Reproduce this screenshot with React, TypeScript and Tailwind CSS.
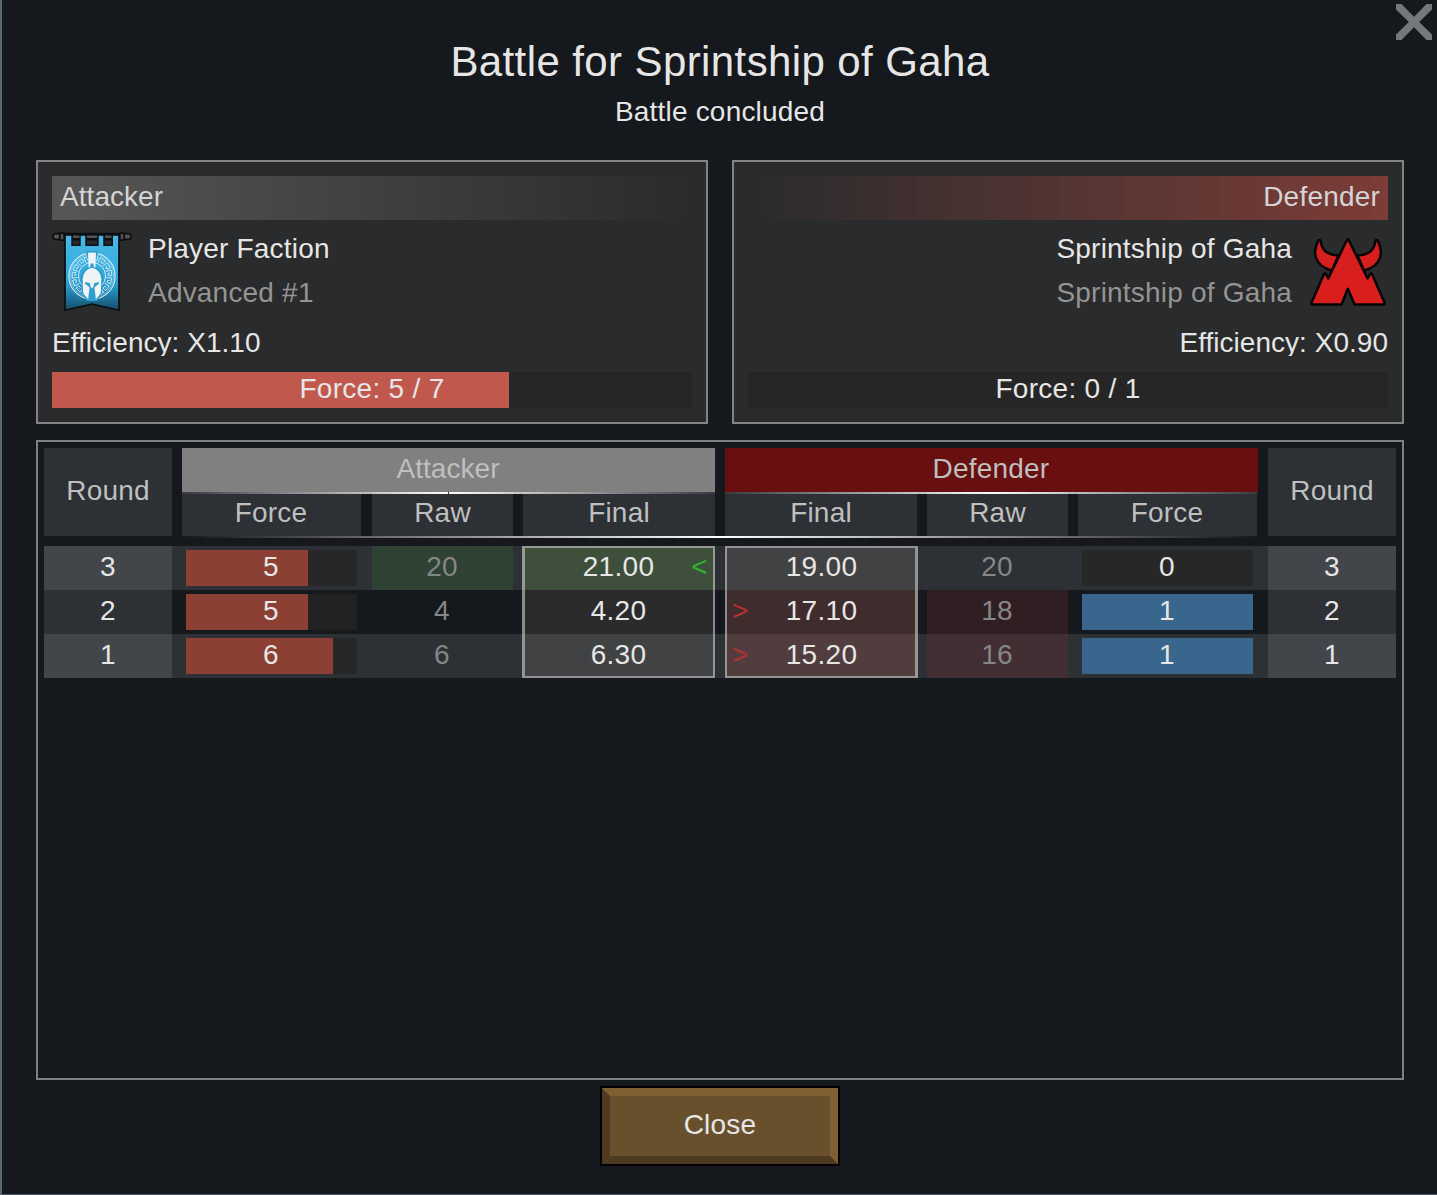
import type { ReactNode } from "react"
import clsx from "clsx"

type Side = "attacker" | "defender"

type Entry = {
  force: number
  raw: number
  final: string
  best?: boolean
  worst?: boolean
}

type Round = {
  id: number
  attacker: Entry
  defender: Entry
}

const MAX_FORCE = { attacker: 7, defender: 1 }

const rounds: Round[] = [
  {
    id: 3,
    attacker: { force: 5, raw: 20, final: "21.00", best: true },
    defender: { force: 0, raw: 20, final: "19.00" },
  },
  {
    id: 2,
    attacker: { force: 5, raw: 4, final: "4.20" },
    defender: { force: 1, raw: 18, final: "17.10", worst: true },
  },
  {
    id: 1,
    attacker: { force: 6, raw: 6, final: "6.30" },
    defender: { force: 1, raw: 16, final: "15.20", worst: true },
  },
]

// Greek key ring, walked in polar coordinates around the shield centre
const keyUnit = [
  [0, 14.6],
  [0, 20],
  [0.72, 20],
  [0.72, 16.4],
  [0.36, 16.4],
  [0.36, 18.2],
]

const keyPath = () => {
  const count = 15
  let d = ""
  for (let i = 0; i < count; i++) {
    keyUnit.forEach(([a, r], j) => {
      const angle = ((i + a) / count) * Math.PI * 2
      const x = 40 + Math.sin(angle) * r
      const y = 44 - Math.cos(angle) * r
      d += `${j === 0 ? "M" : "L"}${x.toFixed(2)} ${y.toFixed(2)}`
    })
  }
  return d
}

const BannerIcon = () => (
  <svg viewBox="0 0 80 80" className="h-20 w-20 shrink-0">
    <defs>
      <linearGradient id="cloth" x1="0" y1="0" x2="0" y2="1">
        <stop offset="0" stopColor="#46b8e6" />
        <stop offset="0.45" stopColor="#38ade0" />
        <stop offset="0.7" stopColor="#2795c8" />
        <stop offset="1" stopColor="#174c68" />
      </linearGradient>
    </defs>
    <path d="M13 3H67V78.3L40 72 13 78.3Z" fill="url(#cloth)" stroke="#0b0d0f" strokeWidth="1.7" />
    <path d="M19.3 2H28.7V14H19.3ZM33.3 2H46.7V14H33.3ZM51.3 2H61V14H51.3Z" fill="#0d0e0f" />
    <path d="M20.6 8.6H27.4V12.6H20.6ZM34.8 8.6H45.2V12.6H34.8ZM52.8 8.6H59.6V12.6H52.8Z" fill="#2a2b2c" />
    <path d="M21 3.6H27.5V6H21ZM35 3.6H45V6H35ZM53 3.6H59.5V6H53Z" fill="#555" />
    <path d="M5 1.8H75" stroke="#0b0d0f" strokeWidth="2" />
    <g fill="#505152" stroke="#0b0d0f" strokeWidth="1.7">
      <rect x="0.9" y="1.6" width="9" height="5.8" rx="2.6" />
      <rect x="7.8" y="0.9" width="4.4" height="7.4" rx="2" />
      <rect x="70.1" y="1.6" width="9" height="5.8" rx="2.6" />
      <rect x="67.8" y="0.9" width="4.4" height="7.4" rx="2" />
    </g>
    <g fill="none" stroke="#cfecf7">
      <circle cx="40" cy="44" r="23.2" strokeWidth="1.1" />
      <circle cx="40" cy="44" r="21.6" strokeWidth="0.5" />
      <circle cx="40" cy="44" r="13.6" strokeWidth="1" />
      <path d={keyPath()} strokeWidth="1" />
    </g>
    <path d="M40 42 33.6 19H46.4ZM40 34Q50.5 36 50.5 46 50.5 58 49.6 62L45 69H35L30.4 62Q29.5 58 29.5 46 29.5 36 40 34Z" fill="#2f9fd2" />
    <path d="M36 20.8Q40 20 44 20.8L43.4 36 41.6 34.5V31.5H38.4V34.5L36.6 36Z" fill="#eef3f5" />
    <path
      d="M40 35.8Q48 37.5 49.2 46 49.4 58 48.6 61.5L43.9 67.6 42.4 55.5 47 51.6 46.8 50 42 51.2 41.6 54.4 40 56.6 38.4 54.4 38 51.2 33.2 50 33 51.6 37.6 55.5 36.1 67.6 31.4 61.5Q30.6 58 30.8 46 32 37.5 40 35.8Z"
      fill="#eef3f5"
    />
  </svg>
)

const HornsIcon = () => (
  <svg viewBox="0 0 80 80" className="h-20 w-20 shrink-0">
    <g fill="#d91e1e" stroke="#060404" strokeWidth="2.5" strokeLinejoin="round">
      <path d="M10.4 8.4C5 19 4.5 33 24 38.8L30.5 23.3C21 23.3 13.4 19 12.8 9.2Q12 7.2 10.4 8.4Z" />
      <path d="M69.6 8.4C75 19 75.5 33 56 38.8L49.5 23.3C59 23.3 66.6 19 67.2 9.2Q68 7.2 69.6 8.4Z" />
      <path d="M39 7.8Q39.8 6.6 40.6 7.8L59.6 46.5 62.4 41.5Q63.4 41 64 42L76.8 71.2Q76.8 72.4 75.8 72.4H46.6L39.8 56.8 33.6 72.4H4.2Q3 72.4 3.3 71.2L16 42Q16.8 41 17.6 41.5L20.2 46.5Z" />
    </g>
  </svg>
)

const ForceBar = ({ value, max, className, fill, children }: { value: number; max: number; className?: string; fill: string; children: ReactNode }) => (
  <div className={clsx("relative h-9 bg-[#262626]/80 text-center leading-[33px]", className)}>
    <div className={clsx("absolute inset-y-0 left-0", fill)} style={{ width: `${(value / max) * 100}%` }} />
    <span className="relative">{children}</span>
  </div>
)

type PanelProps = {
  side: Side
  name: string
  detail: string
  efficiency: string
  force: number
  icon: ReactNode
}

const SidePanel = ({ side, name, detail, efficiency, force, icon }: PanelProps) => {
  const right = side === "defender"
  return (
    <section className={clsx("h-[264px] w-[672px] border-2 border-[#838384] bg-[#2a2b2c] p-[14px]", right && "text-right")}>
      <h2
        className={clsx(
          "h-11 px-2 leading-[42px] text-[#d4d4d4]",
          right ? "bg-linear-to-l from-[#7d3c37] to-[#2a2b2c]" : "bg-linear-to-r from-[#575757] to-[#2a2b2c] tracking-[0.05px]"
        )}
      >
        {right ? "Defender" : "Attacker"}
      </h2>
      <div className={clsx("mt-3 flex h-20 gap-4", right && "flex-row-reverse")}>
        {icon}
        <div className="-mt-[5px] leading-11">
          <p>{name}</p>
          <p className="text-[#949494]">{detail}</p>
        </div>
      </div>
      <p className="mt-2 h-9 overflow-hidden leading-[46px] tracking-[0.03px]">Efficiency: {efficiency}</p>
      <ForceBar value={force} max={MAX_FORCE[side]} fill="bg-[#c1584d]" className="mt-4 tracking-[0.3px]">
        Force: {force} / {MAX_FORCE[side]}
      </ForceBar>
    </section>
  )
}

const HeadCell = ({ className, children }: { className: string; children: ReactNode }) => (
  <div className={clsx("h-11 bg-[#2d3035] leading-[42px]", className)}>{children}</div>
)

const FinalCell = ({ side, entry, dark, first, last }: { side: Side; entry: Entry; dark: boolean; first: boolean; last: boolean }) => (
  <div
    className={clsx(
      "relative h-11 tracking-[0.3px]",
      side === "attacker" ? "-ml-px mr-2.5 w-[193px]" : "mr-[9px] w-[193px]",
      entry.best && "bg-[#3e503c]",
      entry.worst && (dark ? "bg-[#3f2c2d]" : "bg-[#513d3d]"),
      !entry.best && !entry.worst && (dark ? "bg-[#2b2b2c]" : "bg-[#414243]")
    )}
  >
    <div
      className={clsx(
        "absolute inset-0 border-[#d8d8d8]/55",
        side === "attacker" ? "border-l-[3px] border-r-2" : "border-l-2 border-r-[3px]",
        first && "border-t-2",
        last && "border-b-2"
      )}
    />
    <span>{entry.final}</span>
    {entry.best && <span className="absolute right-[7px] top-0 text-[#2cb42c]">&lt;</span>}
    {entry.worst && <span className="absolute left-[7px] top-0 text-[#b83030]">&gt;</span>}
  </div>
)

const RawCell = ({ entry, dark }: { entry: Entry; dark: boolean }) => (
  <div
    className={clsx(
      "mr-2.5 h-11 w-[141px] pr-px text-[#868686]",
      entry.best && "bg-[#2f4234]",
      entry.worst && (dark ? "bg-[#301f22]" : "bg-[#422f33]")
    )}
  >
    {entry.raw}
  </div>
)

const RoundCell = ({ id, dark }: { id: number; dark: boolean }) => (
  <div className={clsx("h-11 w-32", dark ? "bg-[#2d3035]" : "bg-[#424549]")}>{id}</div>
)

const App = () => {
  return (
    <main className="relative h-[1195px] w-[1437px] overflow-hidden border-b border-l-2 border-b-[#4c5966] border-l-[#5b6877] bg-[#15181c] pl-[34px] font-['Liberation_Sans',Arial,sans-serif] text-[28px] tracking-[0.2px] text-[#e6e6e6]">
      <button className="absolute right-[5px] top-1 h-9 w-9" aria-label="Close window">
        <svg viewBox="0 0 36 36" className="h-9 w-9">
          <path d="M0 0H5.5L18 12.8 30.5 0H36V5.5L23.2 18 36 30.5V36H30.5L18 23.2 5.5 36H0V30.5L12.8 18 0 5.5Z" fill="#74787b" />
        </svg>
      </button>

      <header className="w-[1368px] pt-[38px] text-center">
        <h1 className="text-[42px] leading-12 tracking-[0.4px]">Battle for Sprintship of Gaha</h1>
        <p className="mt-1.5 leading-10">Battle concluded</p>
      </header>

      <div className="mt-7 flex gap-6">
        <SidePanel side="attacker" name="Player Faction" detail="Advanced #1" efficiency="X1.10" force={5} icon={<BannerIcon />} />
        <SidePanel side="defender" name="Sprintship of Gaha" detail="Sprintship of Gaha" efficiency="X0.90" force={0} icon={<HornsIcon />} />
      </div>

      <section className="mt-4 h-[640px] w-[1368px] border-2 border-[#808081] p-1.5 text-center">
        <div className="relative flex h-[98px] text-[#bfbfbf]">
          <div className="mr-2.5 h-[88px] w-32 bg-[#2d3035] leading-[86px]">Round</div>
          <div className="relative mr-2.5 w-[533px]">
            <div className="h-11 bg-[#808080] pr-px leading-[42px] tracking-[0.05px]">Attacker</div>
            <div className="flex">
              <HeadCell className="mr-[11px] w-[179px] pr-px">Force</HeadCell>
              <HeadCell className="mr-2.5 w-[141px]">Raw</HeadCell>
              <HeadCell className="w-48">Final</HeadCell>
            </div>
            <div className="absolute left-0 top-11 h-0.5 w-[266px] bg-linear-to-r from-white/5 to-white" />
            <div className="absolute left-[267px] top-11 h-0.5 w-[266px] bg-linear-to-r from-white to-white/5" />
          </div>
          <div className="relative mr-2.5 w-[533px]">
            <div className="h-11 bg-[#6a0f0f] pr-px leading-[42px]">Defender</div>
            <div className="flex">
              <HeadCell className="mr-2.5 w-48">Final</HeadCell>
              <HeadCell className="mr-2.5 w-[141px]">Raw</HeadCell>
              <HeadCell className="w-[179px] pr-px">Force</HeadCell>
            </div>
            <div className="absolute left-0 top-11 h-0.5 w-[533px] bg-linear-to-r from-white/5 via-white to-white/5" />
          </div>
          <div className="h-[88px] w-32 bg-[#2d3035] leading-[86px]">Round</div>
          <div className="absolute left-[138px] top-[88px] h-0.5 w-[1076px] bg-linear-to-r from-white/0 via-white to-white/0" />
        </div>

        {rounds.map((round, i) => {
          const dark = i % 2 === 1
          const first = i === 0
          const last = i === rounds.length - 1
          return (
            <div key={round.id} className={clsx("flex h-11 leading-[42px]", !dark && "bg-[#2d3035]")}>
              <RoundCell id={round.id} dark={dark} />
              <ForceBar value={round.attacker.force} max={MAX_FORCE.attacker} fill="bg-[#8c3f33]" className="ml-[14px] mr-[15px] mt-1 w-[171px] pr-px">
                {round.attacker.force}
              </ForceBar>
              <RawCell entry={round.attacker} dark={dark} />
              <FinalCell side="attacker" entry={round.attacker} dark={dark} first={first} last={last} />
              <FinalCell side="defender" entry={round.defender} dark={dark} first={first} last={last} />
              <RawCell entry={round.defender} dark={dark} />
              <ForceBar value={round.defender.force} max={MAX_FORCE.defender} fill="bg-[#39668d]" className="ml-1 mr-[15px] mt-1 w-[171px] pr-px">
                {round.defender.force}
              </ForceBar>
              <RoundCell id={round.id} dark={dark} />
            </div>
          )
        })}
      </section>

      <div className="mt-1.5 flex w-[1368px] justify-center">
        <button className="h-20 w-60 border-2 border-black">
          <span className="block h-[76px] border-8 border-b-[#4d3a21] border-l-[#4d3a21] border-r-[#7e6032] border-t-[#7e6032] bg-[#69502c] leading-[57px]">
            Close
          </span>
        </button>
      </div>
    </main>
  )
}

export default App
